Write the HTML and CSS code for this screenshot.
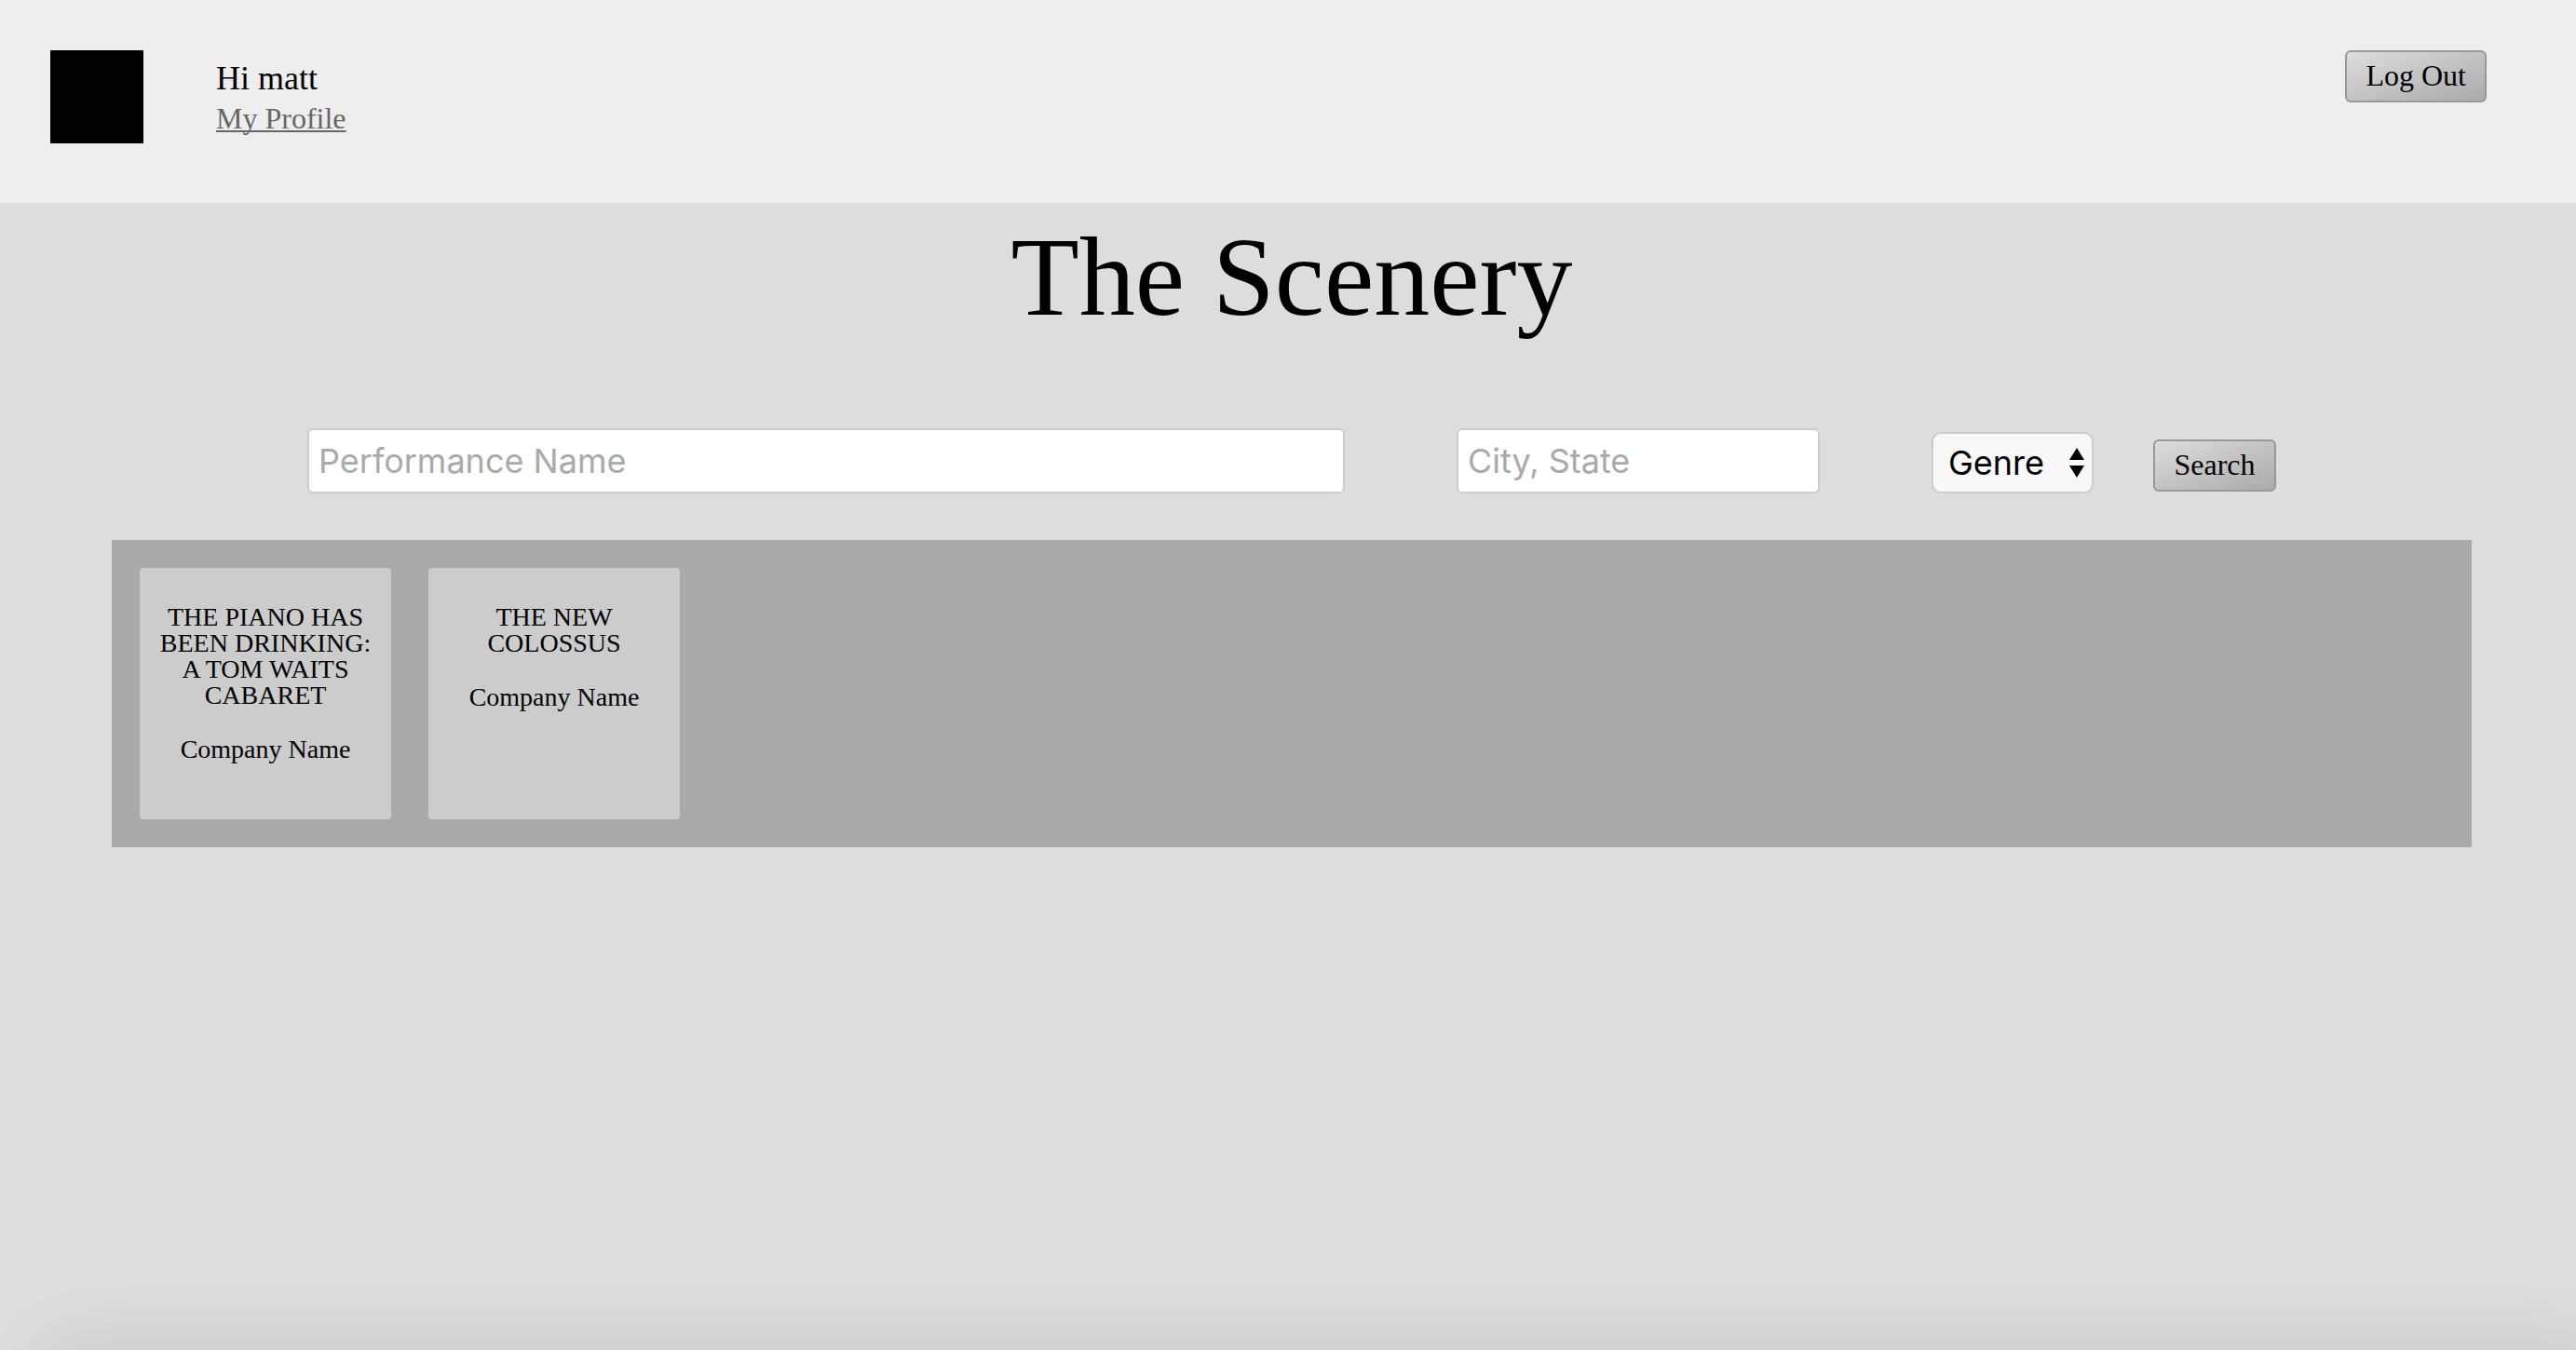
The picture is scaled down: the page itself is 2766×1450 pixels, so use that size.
FILE: index.html
```html
<!DOCTYPE html>
<html lang="en">
<head>
  <meta charset="utf-8">
  <meta name="viewport" content="width=device-width, initial-scale=1">
  <title>The Scenery</title>
  <link rel="stylesheet" href="styles.css">
</head>
<body>
  <header class="site-header">
    <div class="user">
      <div class="avatar"></div>
      <div class="user-info">
        <p class="greeting">Hi matt</p>
        <a class="profile-link" href="#">My Profile</a>
      </div>
    </div>
    <button class="button" type="button">Log Out</button>
  </header>
  <main class="page">
    <h1 class="title">The Scenery</h1>
    <form class="search">
      <input class="field field-name" type="text" placeholder="Performance Name" aria-label="Performance name">
      <input class="field field-place" type="text" placeholder="City, State" aria-label="City, State">
      <div class="genre">
        <select class="genre-select" aria-label="Genre">
          <option>Genre</option>
        </select>
        <svg class="genre-arrows" width="16" height="32" viewBox="0 0 16 32" aria-hidden="true">
          <path d="M8 0L16 13H0ZM0 19H16L8 32Z"/>
        </svg>
      </div>
      <button class="button button-search" type="submit">Search</button>
    </form>
    <section class="results">
      <article class="card">
        <h2 class="card-title">THE PIANO HAS BEEN DRINKING: A TOM WAITS CABARET</h2>
        <p class="card-company">Company Name</p>
      </article>
      <article class="card">
        <h2 class="card-title">THE NEW COLOSSUS</h2>
        <p class="card-company">Company Name</p>
      </article>
    </section>
  </main>
</body>
</html>
```
FILE: styles.css
```css
* {
  box-sizing: border-box;
}

body {
  margin: 0;
  min-height: 100vh;
  background: #ddd;
  color: #000;
  font-family: "Liberation Serif", "Times New Roman", serif;
  font-size: 32px;
}

/* soft shade along the bottom of the window */
body::after {
  content: "";
  position: fixed;
  top: 100%;
  left: 50px;
  right: -30px;
  height: 120px;
  box-shadow: 0 0 80px rgba(0, 0, 0, 0.1);
  pointer-events: none;
}

h1, h2, p {
  margin: 0;
  font-weight: normal;
}

.site-header {
  display: flex;
  justify-content: space-between;
  align-items: flex-start;
  padding: 54px 96px 64px 54px;
  background: #eee;
}

.user {
  display: flex;
  gap: 78px;
}

.avatar {
  width: 100px;
  height: 100px;
  background: #000;
}

.user-info {
  padding-top: 8px;
}

.greeting {
  font-size: 36px;
  line-height: 44px;
}

.profile-link {
  display: block;
  color: #666;
  line-height: 42px;
  text-decoration: underline;
  text-decoration-thickness: 2px;
  text-underline-offset: 2px;
  text-decoration-skip-ink: none;
}

.button {
  height: 56px;
  padding: 0 20px 2px;
  border: 2px solid #999;
  border-radius: 6px;
  background: linear-gradient(to bottom right, #ddd, #aaa);
  color: #000;
  font: inherit;
  line-height: 48px;
}

.page {
  padding: 20px 112px 0 120px;
}

.title {
  font-size: 120px;
  line-height: 120px;
  text-align: center;
}

.search {
  display: flex;
  align-items: flex-end;
  margin-top: 102px;
  padding: 0 210px;
}

.field {
  height: 70px;
  margin-right: 120px;
  padding: 0 10px;
  border: 2px solid #ccc;
  border-radius: 6px;
  background: #fff;
  font-family: Inter, sans-serif;
  font-size: 36px;
}

.field::placeholder {
  color: #aaa;
  opacity: 1;
}

.field-name {
  flex: 1;
  min-width: 0;
}

.field-place {
  width: 390px;
}

.genre {
  position: relative;
  margin-right: 64px;
}

.genre-select {
  display: block;
  width: 174px;
  height: 66px;
  padding: 0 16px;
  border: 2px solid #ccc;
  border-radius: 10px;
  background: #f8f8f8;
  color: #000;
  appearance: none;
  font-family: Inter, sans-serif;
  font-size: 36px;
}

.genre-arrows {
  position: absolute;
  top: 17px;
  right: 10px;
  pointer-events: none;
}

.button-search {
  min-width: 132px;
  margin-bottom: 2px;
}

.results {
  display: flex;
  flex-wrap: wrap;
  gap: 40px;
  margin-top: 50px;
  padding: 30px;
  background: #aaa;
}

.card {
  width: 270px;
  min-height: 270px;
  padding: 39px 20px;
  border-radius: 4px;
  background: #ccc;
  font-size: 28px;
  line-height: 28px;
  text-align: center;
}

.card-title {
  font-size: 28px;
}

.card-company {
  margin-top: 30px;
}
```
